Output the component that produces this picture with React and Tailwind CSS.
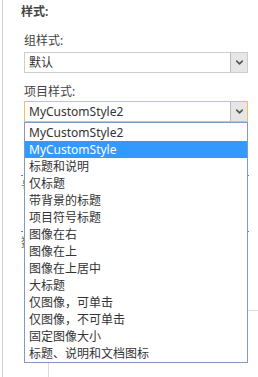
import { ChevronDown } from 'lucide-react'

const xiangmu = [
  'MyCustomStyle2',
  'MyCustomStyle',
  '标题和说明',
  '仅标题',
  '带背景的标题',
  '项目符号标题',
  '图像在右',
  '图像在上',
  '图像在上居中',
  '大标题',
  '仅图像，可单击',
  '仅图像，不可单击',
  '固定图像大小',
  '标题、说明和文档图标',
]

function Xiala({ text, focus }) {
  return (
    <div
      className={`ml-[21px] flex h-[21px] w-[224px] items-center border ${
        focus ? 'border-[#f0c15a]' : 'border-[#cdcdcd]'
      }`}
    >
      <span className="flex-1 pl-[4px] text-[12px] leading-[19px] text-[#333]">{text}</span>
      <div className="flex h-full w-[17px] items-center justify-center border-l border-[#b9b9b9] bg-[#e6e6e6]">
        <ChevronDown size={11} strokeWidth={3.5} className="text-[#555]" />
      </div>
    </div>
  )
}

export default function App() {
  return (
    <div className="h-[377px] w-[258px] overflow-hidden bg-white pl-[2px] font-['Segoe_UI','Noto_Sans','Noto_Sans_CJK_SC',sans-serif]">
      <div className="relative flex h-full flex-col border-l border-[#d2d2d2]">
        <div className="pl-[18px] pt-[4px] text-[12px] font-semibold leading-[16px] text-[#444]">样式:</div>

        <div className="mt-[13px] pl-[21px] text-[12px] leading-[16px] text-[#444]">组样式:</div>
        <div className="mt-[3px]">
          <Xiala text="默认" />
        </div>

        <div className="mt-[11px] pl-[21px] text-[12px] leading-[16px] text-[#444]">项目样式:</div>
        <div className="mt-[1px]">
          <Xiala text="MyCustomStyle2" focus />
        </div>

        {/* rows hidden behind the open list; only their left edge shows */}
        <div className="mt-[53px] ml-[18px] w-[228px] border-t border-dotted border-[#5b7cb5] pt-[3px]">
          <div className="h-[16px] w-[3px] overflow-hidden text-[12px] leading-[16px] text-[#666]">号</div>
        </div>
        <div className="mt-[36px] ml-[18px] w-[228px] border-t border-dotted border-[#5b7cb5] pt-[3px]">
          <div className="h-[16px] w-[3px] overflow-hidden text-[12px] leading-[16px] text-[#666]">数</div>
        </div>

        <div className="mt-auto ml-[45px] h-[67px] border-l border-t border-[#dcdcdc]" />

        {/* open dropdown list */}
        <div className="absolute left-[21px] top-[122px] w-[224px] border border-[#7f9cbf] bg-white pt-[1px]">
          {xiangmu.map((t, i) => (
            <div
              key={t}
              className={`h-[17px] pl-[4px] text-[12px] leading-[17px] ${
                i === 1 ? 'bg-[#3399ff] text-white' : 'text-[#333]'
              }`}
            >
              {t}
            </div>
          ))}
        </div>
      </div>
    </div>
  )
}
